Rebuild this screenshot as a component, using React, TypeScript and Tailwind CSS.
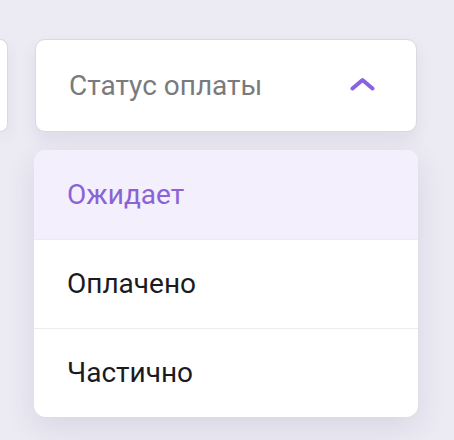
import { useState } from "react"

const options = ["Ожидает", "Оплачено", "Частично"]

export default function App() {
  const [selected, setSelected] = useState("Ожидает")

  return (
    <div className="min-h-[440px] w-full overflow-hidden bg-[#ecebf4] font-['Roboto',sans-serif]">
      <div className="flex gap-[27px] pt-[39px] pl-0 pr-[37px]">
        {/* previous field, cut off */}
        <div className="h-[93px] w-[8px] shrink-0 rounded-r-[10px] border border-l-0 border-[#d9d9de] bg-white shadow-[0_6px_14px_rgba(60,60,90,0.08)]" />

        <div className="flex flex-1 flex-col gap-[18px]">
          {/* Select trigger */}
          <button className="flex h-[93px] w-full items-center justify-between rounded-[10px] border border-[#d9d9de] bg-white pl-[33px] pr-[41px] shadow-[0_8px_16px_rgba(60,60,90,0.08)]">
            <span className="text-[28px] text-[#7a7a7c]">Статус оплаты</span>
            <svg className="-mt-[3px]" width="25" height="14" viewBox="0 0 25 14" fill="none">
              <path d="M2.5 11.5 L12.5 3 L22.5 11.5" stroke="#8b62e0" strokeWidth="4" strokeLinecap="round" strokeLinejoin="round" />
            </svg>
          </button>

          {/* Dropdown */}
          <div className="-mx-px overflow-hidden rounded-[12px] bg-white shadow-[0_10px_30px_rgba(60,60,100,0.12)]">
            {options.map((opt, i) => (
              <div
                key={opt}
                onClick={() => setSelected(opt)}
                className={`flex h-[89px] items-center pl-[33px] text-[28px] ${i > 0 ? "border-t border-[#ececef]" : ""} ${
                  selected === opt ? "bg-[#f3effd] text-[#8a63d6]" : "text-[#1b1b1f]"
                }`}
              >
                {opt}
              </div>
            ))}
          </div>
        </div>
      </div>
    </div>
  )
}
